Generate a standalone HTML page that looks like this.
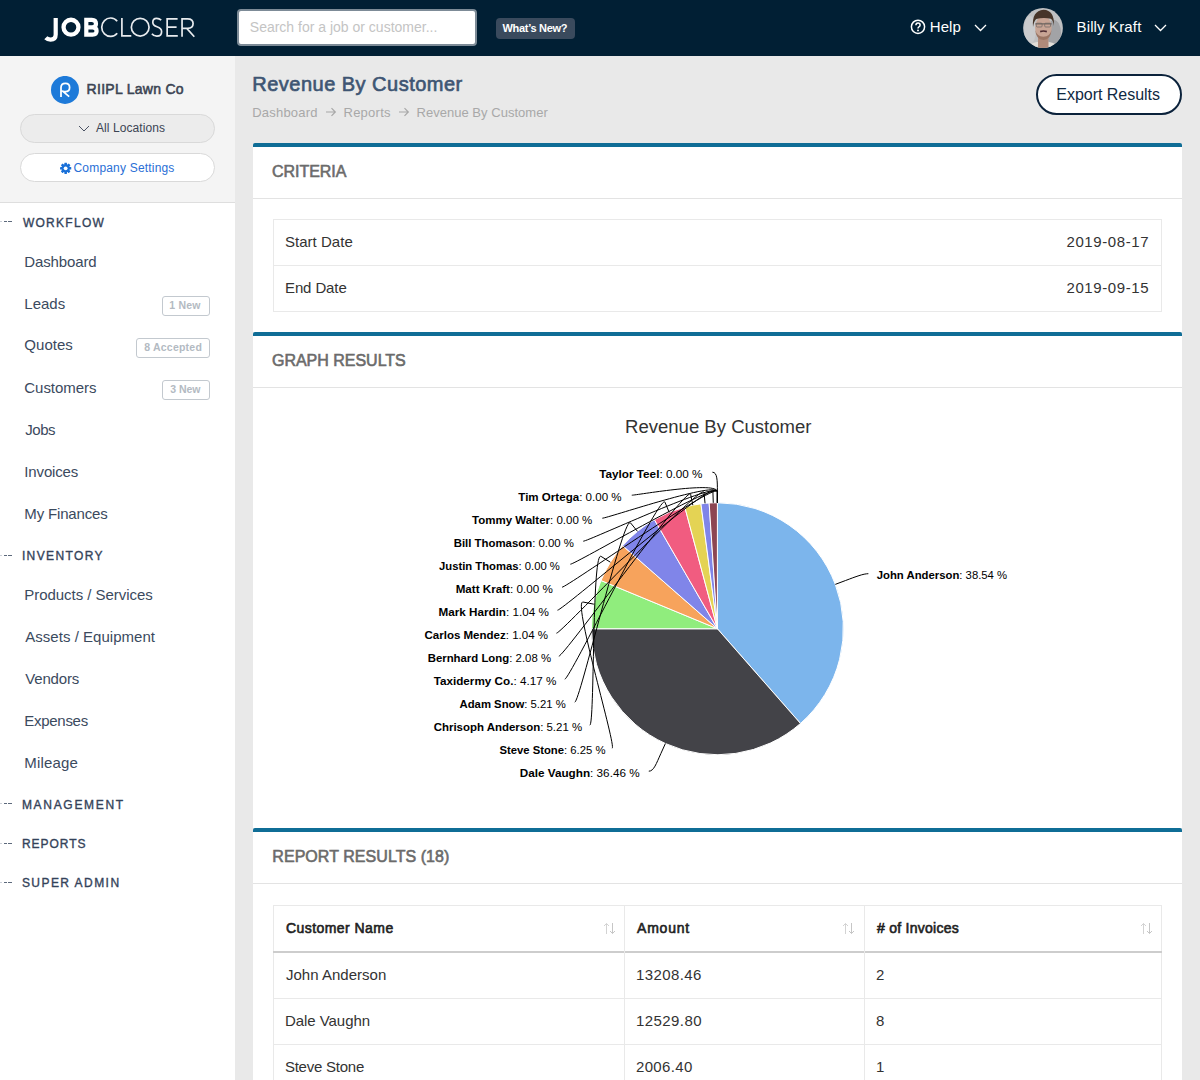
<!DOCTYPE html>
<html><head><meta charset="utf-8"><style>
html,body{margin:0;padding:0}
body{width:1200px;height:1080px;overflow:hidden;position:relative;background:#e9e9e9;font-family:'Liberation Sans', sans-serif}
.t{position:absolute;line-height:1;white-space:pre}
.abs{position:absolute;box-sizing:border-box}
</style></head><body>
<div class=abs style="left:0;top:0;width:1200px;height:56px;background:#011f34"></div>
<svg style="position:absolute;left:0;top:0" width="235" height="56" viewBox="0 0 235 56">
<g fill="none" stroke="#ffffff" stroke-linecap="butt">
 <path d="M55.7 18 V34.5 Q55.7 39.6 50.5 39.6 Q47.5 39.6 45.8 37.8" stroke-width="4.2"/>
 <circle cx="71" cy="27.2" r="7.45" stroke-width="4.3"/>
 <path d="M86.3 17.8 V36.6 M84.2 19.9 H91.8 Q96 19.9 96 23.8 Q96 27.4 91.8 27.4 H86 M86 27.4 H92.6 Q96.6 27.4 96.6 31 Q96.6 34.6 92.6 34.6 H84.2" stroke-width="4.2"/>
 <g stroke="#e8ebee"><path d="M117.2 21.2 A8.8 9.2 0 1 0 117.2 33.2" stroke-width="1.7"/>
 <path d="M121.9 18 V35.95 H131.3" stroke-width="1.7"/>
 <circle cx="140.2" cy="27.2" r="8.85" stroke-width="1.7"/>
 <path d="M161.2 20.2 Q159.3 18.3 156.6 18.3 Q152.8 18.3 152.8 22.3 Q152.8 25.5 157 26.8 Q161.6 28.2 161.6 31.8 Q161.6 36.2 156.8 36.2 Q153.6 36.2 151.9 33.8" stroke-width="1.7"/>
 <path d="M177.6 18.85 H167.15 V35.95 H177.8 M167.15 27.2 H176.6" stroke-width="1.7"/>
 <path d="M182.05 36.8 V18.85 H187.6 Q193.1 18.85 193.1 23.6 Q193.1 28.4 187.6 28.4 H182.05 M186.8 28.4 L194.3 36.8" stroke-width="1.7"/></g>
</g></svg>
<div class=abs style="left:237px;top:9px;width:240px;height:37px;background:#fff;border:2px solid #7d8b97;border-radius:4px"></div>
<div class=abs style="left:496px;top:18px;width:79px;height:21px;background:#3a4a5d;border-radius:4px"></div>
<svg style="position:absolute;left:909px;top:18px" width="18" height="18" viewBox="0 0 18 18"><circle cx="9" cy="8.8" r="6.6" fill="none" stroke="#fff" stroke-width="1.5"/><path d="M6.9 7.2 Q6.9 4.9 9 4.9 Q11.1 4.9 11.1 6.9 Q11.1 8.2 9.9 8.8 Q9 9.3 9 10.4" fill="none" stroke="#fff" stroke-width="1.5"/><circle cx="9" cy="12.4" r="0.95" fill="#fff"/></svg>
<svg style="position:absolute;left:972.5px;top:23px" width="15" height="9.5"><path d="M2 2 L7.5 7.5 L13 2" fill="none" stroke="#ffffff" stroke-width="1.3"/></svg>
<svg style="position:absolute;left:1023px;top:8px" width="40" height="40" viewBox="0 0 40 40">
<defs><clipPath id="avc"><circle cx="20" cy="20" r="19.9"/></clipPath>
<filter id="avb" x="-20%" y="-20%" width="140%" height="140%"><feGaussianBlur stdDeviation="0.7"/></filter></defs>
<g clip-path="url(#avc)">
<rect width="40" height="40" fill="#c0c1c3"/>
<g filter="url(#avb)">
<ellipse cx="31" cy="25" rx="7" ry="13" fill="#a2a3a6"/>
<ellipse cx="7" cy="22" rx="6" ry="14" fill="#cacbcd"/>
<path d="M3 41 Q7 34.5 14 34 L26 34 Q33 34.5 37 41 Z" fill="#e2ded9"/>
<path d="M15 27 L15 41 L25.5 41 L25.5 27 Z" fill="#b08a7a"/>
<ellipse cx="20.4" cy="19.5" rx="8.3" ry="11.3" fill="#c8a595"/>
<path d="M12.3 22 Q12.8 31.5 20.4 32 Q28 31.5 28.5 22 Q27.2 28.2 20.4 28.8 Q13.6 28.2 12.3 22 Z" fill="#9a7564"/>
<path d="M10 19 Q8.6 2.8 20.5 1.8 Q31.8 2.3 30.9 18 Q30.2 12 27.8 10.8 Q20.5 9.2 13.2 11 Q11 12.8 10 19 Z" fill="#47362a"/>
<path d="M12.3 15.9 H28.7" stroke="#5a5452" stroke-width="1"/>
<rect x="13.3" y="15.2" width="5.8" height="3.8" rx="1" fill="none" stroke="#6c6663" stroke-width="0.7"/>
<rect x="21.7" y="15.2" width="5.8" height="3.8" rx="1" fill="none" stroke="#6c6663" stroke-width="0.7"/>
<path d="M17.2 23.6 Q20.4 22.4 23.8 23.6" stroke="#4a2a30" stroke-width="1.7" fill="none"/>
</g></g></svg>
<svg style="position:absolute;left:1153px;top:23px" width="15" height="9.5"><path d="M2 2 L7.5 7.5 L13 2" fill="none" stroke="#ffffff" stroke-width="1.3"/></svg>
<div class=abs style="left:0;top:56px;width:235px;height:1024px;background:#ffffff"></div>
<div class=abs style="left:0;top:56px;width:235px;height:147px;background:#f4f4f4;border-bottom:1px solid #dedede"></div>
<svg style="position:absolute;left:51px;top:76px" width="28" height="28" viewBox="0 0 28 28"><circle cx="14" cy="13.9" r="14" fill="#1d7ad9"/><path d="M10 21 V11.6 Q10 7.3 14.4 7.3 Q18.6 7.3 18.6 11.5 Q18.6 15.7 14.4 15.7 Q12.4 15.7 11.6 15.1 L18.2 20.6" fill="none" stroke="#fff" stroke-width="1.75" stroke-linejoin="round"/></svg>
<div class=abs style="left:20px;top:114px;width:195px;height:29px;background:#ececec;border:1px solid #d9d9d9;border-radius:15px"></div>
<svg style="position:absolute;left:77px;top:123.5px" width="14" height="9"><path d="M2 2 L7.0 7 L12 2" fill="none" stroke="#4a5263" stroke-width="1"/></svg>
<div class=abs style="left:20px;top:153px;width:195px;height:29px;background:#ffffff;border:1px solid #d9d9d9;border-radius:15px"></div>
<svg style="position:absolute;left:59px;top:162px" width="13" height="13" viewBox="-6.5 -6.5 13 13"><g fill="#1a70d8" transform="translate(0.15,-0.2)"><rect x="-1.3" y="-5.6" width="2.6" height="3" rx="0.4" transform="rotate(0)"/><rect x="-1.3" y="-5.6" width="2.6" height="3" rx="0.4" transform="rotate(45)"/><rect x="-1.3" y="-5.6" width="2.6" height="3" rx="0.4" transform="rotate(90)"/><rect x="-1.3" y="-5.6" width="2.6" height="3" rx="0.4" transform="rotate(135)"/><rect x="-1.3" y="-5.6" width="2.6" height="3" rx="0.4" transform="rotate(180)"/><rect x="-1.3" y="-5.6" width="2.6" height="3" rx="0.4" transform="rotate(225)"/><rect x="-1.3" y="-5.6" width="2.6" height="3" rx="0.4" transform="rotate(270)"/><rect x="-1.3" y="-5.6" width="2.6" height="3" rx="0.4" transform="rotate(315)"/><circle r="4.1"/></g><circle cx="0.15" cy="-0.2" r="1.9" fill="#ffffff"/></svg>
<div style="position:absolute;left:0;top:221px;width:12px;height:1px;background:linear-gradient(90deg,#c9ced6 0 2.5px,transparent 2.5px 4px,#5d6a7c 4px 7px,transparent 7px 8.3px,#5d6a7c 8.3px 11.8px,transparent 11.8px)"></div><div style="position:absolute;left:0;top:555px;width:12px;height:1px;background:linear-gradient(90deg,#c9ced6 0 2.5px,transparent 2.5px 4px,#5d6a7c 4px 7px,transparent 7px 8.3px,#5d6a7c 8.3px 11.8px,transparent 11.8px)"></div><div style="position:absolute;left:0;top:803px;width:12px;height:1px;background:linear-gradient(90deg,#c9ced6 0 2.5px,transparent 2.5px 4px,#5d6a7c 4px 7px,transparent 7px 8.3px,#5d6a7c 8.3px 11.8px,transparent 11.8px)"></div><div style="position:absolute;left:0;top:843px;width:12px;height:1px;background:linear-gradient(90deg,#c9ced6 0 2.5px,transparent 2.5px 4px,#5d6a7c 4px 7px,transparent 7px 8.3px,#5d6a7c 8.3px 11.8px,transparent 11.8px)"></div><div style="position:absolute;left:0;top:882px;width:12px;height:1px;background:linear-gradient(90deg,#c9ced6 0 2.5px,transparent 2.5px 4px,#5d6a7c 4px 7px,transparent 7px 8.3px,#5d6a7c 8.3px 11.8px,transparent 11.8px)"></div>
<div class=abs style="left:162px;top:296px;width:48px;height:20px;border:1px solid #c3c9cf;border-radius:3px"></div>
<div class=abs style="left:136px;top:338px;width:74px;height:20px;border:1px solid #c3c9cf;border-radius:3px"></div>
<div class=abs style="left:162px;top:380px;width:48px;height:20px;border:1px solid #c3c9cf;border-radius:3px"></div>
<svg style="position:absolute;left:324px;top:105px" width="14" height="14" viewBox="0 0 14 14"><path d="M2 7 H11 M7.5 3.2 L11.3 7 L7.5 10.8" fill="none" stroke="#a8a8a8" stroke-width="1.2"/></svg>
<svg style="position:absolute;left:397px;top:105px" width="14" height="14" viewBox="0 0 14 14"><path d="M2 7 H11 M7.5 3.2 L11.3 7 L7.5 10.8" fill="none" stroke="#a8a8a8" stroke-width="1.2"/></svg>
<div class=abs style="left:1036px;top:74px;width:146px;height:41px;background:#fff;border:2px solid #0b223b;border-radius:21px"></div>
<!-- card 1 -->
<div class=abs style="left:253px;top:143px;width:929px;height:189px;background:#fff;border-top:4px solid #0f6d96;border-radius:2px 2px 0 0"></div>
<div class=abs style="left:253px;top:198px;width:929px;height:1px;background:#e3e3e3"></div>
<div class=abs style="left:273px;top:219px;width:889px;height:93px;border:1px solid #e9e9e9"></div>
<div class=abs style="left:274px;top:265px;width:887px;height:1px;background:#e9e9e9"></div>
<!-- card 2 -->
<div class=abs style="left:253px;top:332px;width:929px;height:496px;background:#fff;border-top:4px solid #0f6d96;border-radius:2px 2px 0 0"></div>
<div class=abs style="left:253px;top:387px;width:929px;height:1px;background:#e3e3e3"></div>
<!-- card 3 -->
<div class=abs style="left:253px;top:828px;width:929px;height:260px;background:#fff;border-top:4px solid #0f6d96;border-radius:2px 2px 0 0"></div>
<div class=abs style="left:253px;top:883px;width:929px;height:1px;background:#e3e3e3"></div>
<div class=abs style="left:273px;top:905px;width:889px;height:200px;border:1px solid #e9e9e9"></div>
<div class=abs style="left:273px;top:951px;width:889px;height:2px;background:#cdcdcd"></div>
<div class=abs style="left:274px;top:998px;width:887px;height:1px;background:#e9e9e9"></div>
<div class=abs style="left:274px;top:1044px;width:887px;height:1px;background:#e9e9e9"></div>
<div class=abs style="left:624px;top:906px;width:1px;height:200px;background:#e9e9e9"></div>
<div class=abs style="left:864px;top:906px;width:1px;height:200px;background:#e9e9e9"></div>
<svg style="position:absolute;left:603px;top:922px" width="13" height="13" viewBox="0 0 13 13">
<path d="M3.5 12 V1.5 M1 4 L3.5 1.5 L6 4" fill="none" stroke="#d3d3d3" stroke-width="1"/>
<path d="M9.5 1 V11.5 M7 9 L9.5 11.5 L12 9" fill="none" stroke="#c6c6c6" stroke-width="1"/></svg><svg style="position:absolute;left:842px;top:922px" width="13" height="13" viewBox="0 0 13 13">
<path d="M3.5 12 V1.5 M1 4 L3.5 1.5 L6 4" fill="none" stroke="#d3d3d3" stroke-width="1"/>
<path d="M9.5 1 V11.5 M7 9 L9.5 11.5 L12 9" fill="none" stroke="#c6c6c6" stroke-width="1"/></svg><svg style="position:absolute;left:1140px;top:922px" width="13" height="13" viewBox="0 0 13 13">
<path d="M3.5 12 V1.5 M1 4 L3.5 1.5 L6 4" fill="none" stroke="#d3d3d3" stroke-width="1"/>
<path d="M9.5 1 V11.5 M7 9 L9.5 11.5 L12 9" fill="none" stroke="#c6c6c6" stroke-width="1"/></svg>
<svg style="position:absolute;left:0;top:0" width="1200" height="1080" viewBox="0 0 1200 1080">
<g><path d="M717.40 628.75 L717.40 502.75 A126.0 126.0 0 0 1 800.48 723.48 Z" fill="#7cb5ec" stroke="#ffffff" stroke-width="1" stroke-linejoin="round"/><path d="M717.40 628.75 L800.48 723.48 A126.0 126.0 0 0 1 591.40 628.75 Z" fill="#434348" stroke="#ffffff" stroke-width="1" stroke-linejoin="round"/><path d="M717.40 628.75 L591.40 628.75 A126.0 126.0 0 0 1 600.99 580.53 Z" fill="#90ed7d" stroke="#ffffff" stroke-width="1" stroke-linejoin="round"/><path d="M717.40 628.75 L600.99 580.53 A126.0 126.0 0 0 1 622.67 545.67 Z" fill="#f7a35c" stroke="#ffffff" stroke-width="1" stroke-linejoin="round"/><path d="M717.40 628.75 L622.67 545.67 A126.0 126.0 0 0 1 654.40 519.63 Z" fill="#8085e9" stroke="#ffffff" stroke-width="1" stroke-linejoin="round"/><path d="M717.40 628.75 L654.40 519.63 A126.0 126.0 0 0 1 684.79 507.04 Z" fill="#f15c80" stroke="#ffffff" stroke-width="1" stroke-linejoin="round"/><path d="M717.40 628.75 L684.79 507.04 A126.0 126.0 0 0 1 700.95 503.83 Z" fill="#e4d354" stroke="#ffffff" stroke-width="1" stroke-linejoin="round"/><path d="M717.40 628.75 L700.95 503.83 A126.0 126.0 0 0 1 709.16 503.02 Z" fill="#8085e8" stroke="#ffffff" stroke-width="1" stroke-linejoin="round"/><path d="M717.40 628.75 L709.16 503.02 A126.0 126.0 0 0 1 717.40 502.75 Z" fill="#8d4653" stroke="#ffffff" stroke-width="1" stroke-linejoin="round"/></g>
<g fill="none" stroke="#000000" stroke-width="1"><path d="M712.40 472.20 C717.40 472.20 717.40 480.75 717.40 491.75 L717.40 502.75"/><path d="M631.77 495.20 C636.77 495.20 717.40 480.75 717.40 491.75 L717.40 502.75"/><path d="M602.33 518.20 C607.33 518.20 717.40 480.75 717.40 491.75 L717.40 502.75"/><path d="M583.28 541.20 C588.28 541.20 717.40 480.75 717.40 491.75 L717.40 502.75"/><path d="M570.38 564.20 C575.38 564.20 717.40 480.75 717.40 491.75 L717.40 502.75"/><path d="M562.04 587.20 C567.04 587.20 717.40 480.75 717.40 491.75 L717.40 502.75"/><path d="M557.51 610.20 C562.51 610.20 712.56 480.83 712.92 491.82 L713.28 502.82"/><path d="M556.46 633.20 C561.46 633.20 702.89 481.46 703.97 492.41 L705.05 503.36"/><path d="M558.83 656.20 C563.83 656.20 688.53 483.59 690.67 494.38 L692.82 505.17"/><path d="M564.78 679.20 C569.78 679.20 660.76 492.02 664.97 502.18 L669.18 512.34"/><path d="M574.77 702.20 C579.77 702.20 623.51 514.34 630.49 522.85 L637.47 531.35"/><path d="M589.79 725.20 C594.79 725.20 591.72 550.60 601.06 556.40 L610.40 562.21"/><path d="M612.06 748.20 C617.06 748.20 572.24 599.88 583.03 602.02 L593.82 604.17"/><path d="M648.81 771.20 C653.81 771.20 656.32 763.56 660.86 753.54 L665.40 743.52"/><path d="M868.36 573.70 C863.36 573.70 855.91 576.62 845.62 580.49 L835.32 584.37"/></g>
<g font-family="'Liberation Sans', sans-serif" font-size="11" fill="#000000"><g transform="translate(599.30,477.70) scale(1.0649,1)"><text><tspan font-weight="bold">Taylor Teel</tspan>: 0.00 %</text></g><g transform="translate(518.30,500.70) scale(1.0531,1)"><text><tspan font-weight="bold">Tim Ortega</tspan>: 0.00 %</text></g><g transform="translate(472.00,523.70) scale(1.0478,1)"><text><tspan font-weight="bold">Tommy Walter</tspan>: 0.00 %</text></g><g transform="translate(453.66,546.70) scale(1.0374,1)"><text><tspan font-weight="bold">Bill Thomason</tspan>: 0.00 %</text></g><g transform="translate(439.00,569.70) scale(1.0254,1)"><text><tspan font-weight="bold">Justin Thomas</tspan>: 0.00 %</text></g><g transform="translate(455.64,592.70) scale(1.0593,1)"><text><tspan font-weight="bold">Matt Kraft</tspan>: 0.00 %</text></g><g transform="translate(438.44,615.70) scale(1.0631,1)"><text><tspan font-weight="bold">Mark Hardin</tspan>: 1.04 %</text></g><g transform="translate(424.50,638.70) scale(1.0483,1)"><text><tspan font-weight="bold">Carlos Mendez</tspan>: 1.04 %</text></g><g transform="translate(427.66,661.70) scale(1.0356,1)"><text><tspan font-weight="bold">Bernhard Long</tspan>: 2.08 %</text></g><g transform="translate(433.70,684.70) scale(1.0643,1)"><text><tspan font-weight="bold">Taxidermy Co.</tspan>: 4.17 %</text></g><g transform="translate(459.50,707.70) scale(1.0301,1)"><text><tspan font-weight="bold">Adam Snow</tspan>: 5.21 %</text></g><g transform="translate(433.70,730.70) scale(1.0423,1)"><text><tspan font-weight="bold">Chrisoph Anderson</tspan>: 5.21 %</text></g><g transform="translate(499.40,753.70) scale(1.0272,1)"><text><tspan font-weight="bold">Steve Stone</tspan>: 6.25 %</text></g><g transform="translate(519.73,776.70) scale(1.0667,1)"><text><tspan font-weight="bold">Dale Vaughn</tspan>: 36.46 %</text></g><g transform="translate(876.70,579.20) scale(1.0299,1)"><text><tspan font-weight="bold">John Anderson</tspan>: 38.54 %</text></g></g>
<g transform="translate(718.25,432.9) scale(1.03,1)"><text text-anchor="middle" font-family="'Liberation Sans', sans-serif" font-size="18" fill="#333333">Revenue By Customer</text></g>
</svg>
<div class=t style="left:249.80px;top:19.70px;font-size:14px;font-weight:400;color:#c4c4c4;letter-spacing:0.000px;">Search for a job or customer...</div><div class=t style="left:502.50px;top:23.20px;font-size:11px;font-weight:700;color:#ffffff;letter-spacing:-0.300px;">What’s New?</div><div class=t style="left:929.80px;top:19.00px;font-size:15px;font-weight:400;color:#ffffff;letter-spacing:0.067px;">Help</div><div class=t style="left:1076.50px;top:18.80px;font-size:15px;font-weight:400;color:#ffffff;letter-spacing:0.150px;">Billy Kraft</div><div class=t style="left:86.60px;top:82.20px;font-size:14px;font-weight:400;color:#3b4453;letter-spacing:0.283px;-webkit-text-stroke:0.55px #3b4453;">RIIPL Lawn Co</div><div class=t style="left:95.90px;top:122.10px;font-size:12px;font-weight:400;color:#3b4453;letter-spacing:0.083px;">All Locations</div><div class=t style="left:73.50px;top:161.50px;font-size:12px;font-weight:400;color:#2a6fd6;letter-spacing:0.187px;">Company Settings</div><div class=t style="left:22.90px;top:216.70px;font-size:12px;font-weight:400;color:#34435a;letter-spacing:1.286px;-webkit-text-stroke:0.35px #34435a;">WORKFLOW</div><div class=t style="left:21.90px;top:550.40px;font-size:12px;font-weight:400;color:#34435a;letter-spacing:1.375px;-webkit-text-stroke:0.35px #34435a;">INVENTORY</div><div class=t style="left:21.90px;top:799.20px;font-size:12px;font-weight:400;color:#34435a;letter-spacing:1.700px;-webkit-text-stroke:0.35px #34435a;">MANAGEMENT</div><div class=t style="left:21.90px;top:838.20px;font-size:12px;font-weight:400;color:#34435a;letter-spacing:0.967px;-webkit-text-stroke:0.35px #34435a;">REPORTS</div><div class=t style="left:21.90px;top:877.00px;font-size:12px;font-weight:400;color:#34435a;letter-spacing:1.450px;-webkit-text-stroke:0.35px #34435a;">SUPER ADMIN</div><div class=t style="left:24.30px;top:253.70px;font-size:15px;font-weight:400;color:#3b4a5e;letter-spacing:-0.125px;">Dashboard</div><div class=t style="left:24.30px;top:295.50px;font-size:15px;font-weight:400;color:#3b4a5e;letter-spacing:0.000px;">Leads</div><div class=t style="left:24.30px;top:337.40px;font-size:15px;font-weight:400;color:#3b4a5e;letter-spacing:0.040px;">Quotes</div><div class=t style="left:24.30px;top:379.60px;font-size:15px;font-weight:400;color:#3b4a5e;letter-spacing:-0.037px;">Customers</div><div class=t style="left:25.30px;top:421.50px;font-size:15px;font-weight:400;color:#3b4a5e;letter-spacing:-0.467px;">Jobs</div><div class=t style="left:24.30px;top:463.60px;font-size:15px;font-weight:400;color:#3b4a5e;letter-spacing:-0.143px;">Invoices</div><div class=t style="left:24.30px;top:505.50px;font-size:15px;font-weight:400;color:#3b4a5e;letter-spacing:-0.160px;">My Finances</div><div class=t style="left:24.30px;top:587.00px;font-size:15px;font-weight:400;color:#3b4a5e;letter-spacing:-0.044px;">Products / Services</div><div class=t style="left:25.30px;top:628.80px;font-size:15px;font-weight:400;color:#3b4a5e;letter-spacing:0.024px;">Assets / Equipment</div><div class=t style="left:25.30px;top:670.80px;font-size:15px;font-weight:400;color:#3b4a5e;letter-spacing:-0.183px;">Vendors</div><div class=t style="left:24.30px;top:712.80px;font-size:15px;font-weight:400;color:#3b4a5e;letter-spacing:-0.286px;">Expenses</div><div class=t style="left:24.30px;top:754.70px;font-size:15px;font-weight:400;color:#3b4a5e;letter-spacing:0.167px;">Mileage</div><div class=t style="left:169.20px;top:299.80px;font-size:10.5px;font-weight:700;color:#b3bac2;letter-spacing:0.250px;">1 New</div><div class=t style="left:144.20px;top:341.80px;font-size:10.5px;font-weight:700;color:#b3bac2;letter-spacing:0.222px;">8 Accepted</div><div class=t style="left:170.20px;top:383.80px;font-size:10.5px;font-weight:700;color:#b3bac2;letter-spacing:0.000px;">3 New</div><div class=t style="left:252.30px;top:74.10px;font-size:20px;font-weight:400;color:#3e5573;letter-spacing:0.483px;-webkit-text-stroke:0.65px #3e5573;">Revenue By Customer</div><div class=t style="left:252.30px;top:105.70px;font-size:13px;font-weight:400;color:#a8a8a8;letter-spacing:0.188px;">Dashboard</div><div class=t style="left:343.50px;top:105.70px;font-size:13px;font-weight:400;color:#a8a8a8;letter-spacing:0.250px;">Reports</div><div class=t style="left:416.50px;top:105.70px;font-size:13px;font-weight:400;color:#a8a8a8;letter-spacing:0.028px;">Revenue By Customer</div><div class=t style="left:1056.30px;top:86.60px;font-size:16px;font-weight:400;color:#0f2942;letter-spacing:-0.023px;">Export Results</div><div class=t style="left:272.00px;top:164.20px;font-size:16px;font-weight:400;color:#6b6b6b;letter-spacing:-0.043px;-webkit-text-stroke:0.6px #6b6b6b;">CRITERIA</div><div class=t style="left:285.00px;top:233.80px;font-size:15px;font-weight:400;color:#333333;letter-spacing:0.022px;">Start Date</div><div class=t style="left:285.00px;top:279.80px;font-size:15px;font-weight:400;color:#333333;letter-spacing:-0.114px;">End Date</div><div class=t style="left:1066.50px;top:233.80px;font-size:15px;font-weight:400;color:#333333;letter-spacing:0.589px;">2019-08-17</div><div class=t style="left:1066.50px;top:279.80px;font-size:15px;font-weight:400;color:#333333;letter-spacing:0.589px;">2019-09-15</div><div class=t style="left:272.00px;top:353.40px;font-size:16px;font-weight:400;color:#6b6b6b;letter-spacing:-0.017px;-webkit-text-stroke:0.6px #6b6b6b;">GRAPH RESULTS</div><div class=t style="left:272.30px;top:849.40px;font-size:16px;font-weight:400;color:#6b6b6b;letter-spacing:0.056px;-webkit-text-stroke:0.6px #6b6b6b;">REPORT RESULTS (18)</div><div class=t style="left:285.90px;top:921.20px;font-size:14px;font-weight:400;color:#222222;letter-spacing:0.450px;-webkit-text-stroke:0.6px #222222;">Customer Name</div><div class=t style="left:637.00px;top:921.20px;font-size:14px;font-weight:400;color:#222222;letter-spacing:0.800px;-webkit-text-stroke:0.6px #222222;">Amount</div><div class=t style="left:877.00px;top:921.20px;font-size:14px;font-weight:400;color:#222222;letter-spacing:0.267px;-webkit-text-stroke:0.6px #222222;"># of Invoices</div><div class=t style="left:285.90px;top:966.70px;font-size:15px;font-weight:400;color:#333333;letter-spacing:0.025px;">John Anderson</div><div class=t style="left:636.00px;top:966.70px;font-size:15px;font-weight:400;color:#333333;letter-spacing:0.400px;">13208.46</div><div class=t style="left:876.00px;top:966.70px;font-size:15px;font-weight:400;color:#333333;letter-spacing:0.000px;">2</div><div class=t style="left:284.90px;top:1012.70px;font-size:15px;font-weight:400;color:#333333;letter-spacing:-0.040px;">Dale Vaughn</div><div class=t style="left:636.00px;top:1012.70px;font-size:15px;font-weight:400;color:#333333;letter-spacing:0.429px;">12529.80</div><div class=t style="left:876.00px;top:1012.70px;font-size:15px;font-weight:400;color:#333333;letter-spacing:0.000px;">8</div><div class=t style="left:284.90px;top:1058.70px;font-size:15px;font-weight:400;color:#333333;letter-spacing:-0.230px;">Steve Stone</div><div class=t style="left:636.00px;top:1058.70px;font-size:15px;font-weight:400;color:#333333;letter-spacing:0.333px;">2006.40</div><div class=t style="left:876.00px;top:1058.70px;font-size:15px;font-weight:400;color:#333333;letter-spacing:0.000px;">1</div>
</body></html>
